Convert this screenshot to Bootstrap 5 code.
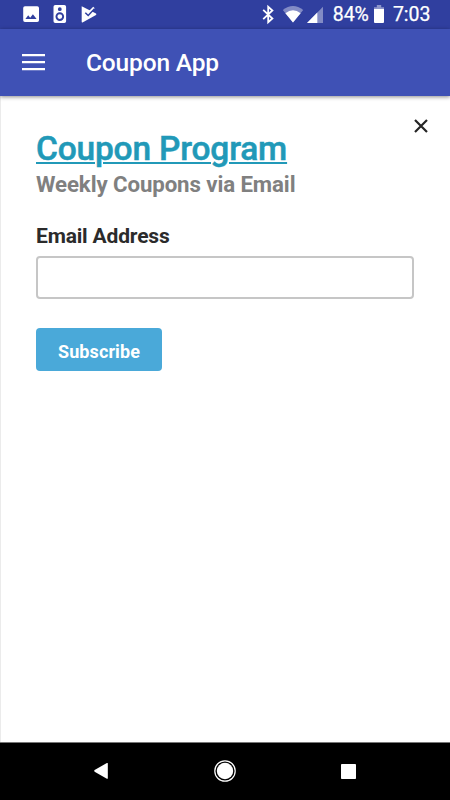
<!DOCTYPE html>
<html lang="en">
<head>
<meta charset="utf-8">
<meta name="viewport" content="width=device-width, initial-scale=1">
<title>Coupon App</title>
<link href="https://cdn.jsdelivr.net/npm/bootstrap@5.3.0/dist/css/bootstrap.min.css" rel="stylesheet">
<style>
  body { font-family: Roboto, "Noto Sans", sans-serif; height: 100vh; overflow: hidden; }
  svg { display: block; flex: none; }
  .status-bar { height: 29px; background: #303f9f; padding: 1px 19.5px 0 22px; font-size: 19.5px; line-height: 28px; -webkit-text-stroke: .25px #fff; }
  .app-bar { height: 67px; background: #3f51b5; padding: 0 22px; box-shadow: 0 1px 4px rgba(0,0,0,.45); z-index: 1; }
  .app-title { font-size: 24.5px; line-height: 30px; font-weight: 500; margin: 1px 0 0 41px; letter-spacing: -.15px; }
  .menu-btn, .close-btn { line-height: 0; }
  .page { border-left: 1px solid #ebebeb; padding: 23px 22px 0 35px; }
  .form-area { width: 378px; }
  .program-title { font-size: 33.5px; line-height: 40px; padding-top: 2px; font-weight: 500; -webkit-text-stroke: .5px #2199b8; letter-spacing: -.18px; color: #2199b8; text-decoration-thickness: 2px; text-underline-offset: 2px; }
  .program-title:hover { color: #2199b8; }
  .subtitle { font-size: 22.25px; line-height: 26px; letter-spacing: -.1px; color: #808080; padding-top: 2px; }
  .field-label { font-size: 21px; line-height: 26px; letter-spacing: -.17px; color: #2b2b2b; margin: 26px 0 7px; }
  .email-input { height: 43px; border: 2px solid #c6c6c6; border-radius: 4px; }
  .subscribe-btn { width: 126px; height: 43px; margin-top: 29px; background: #4aa9d9; border-radius: 4px; font-size: 18px; line-height: 24px; letter-spacing: .1px; padding: 5px 0 0; }
  .nav-keys { height: 58px; background: #000; border-top: 1px solid #777; }
</style>
</head>
<body class="d-flex flex-column bg-white">
<div class="status-bar d-flex align-items-center text-white">
  <svg width="76" height="28" viewBox="22 1 76 28" fill="#fff">
    <path fill-rule="evenodd" d="M25 6.200h12.200q1.800 0 1.800 1.800v12.200q0 1.800-1.800 1.800H25q-1.800 0-1.800-1.800V8q0-1.800 1.800-1.800zM25.400 19h11.200l-3.700-4.700-2.700 3.400-2-2.400z"/>
    <path fill-rule="evenodd" d="M55.300 5h9q1.800 0 1.800 1.800v14.400q0 1.800-1.800 1.800h-9q-1.800 0-1.800-1.800V6.800q0-1.800 1.800-1.800zM59.800 7.300a1.900 1.900 0 1 0 0 3.800 1.900 1.900 0 0 0 0-3.800zm0 5a4.300 4.300 0 1 0 0 8.600 4.300 4.300 0 0 0 0-8.600zm0 1.900a2.400 2.400 0 1 1 0 4.800 2.400 2.400 0 0 1 0-4.800z"/>
    <path d="M81.700 6.200 96 13.600q.8.700 0 1.400L82.500 22.400q-.8.300-.8-.6z"/>
    <path d="m87.500 11.500 2 .5 4.500-4.500" fill="none" stroke="#fff" stroke-width="2.200"/>
    <path d="m85.300 12.700 2.900 2.800 6.300-6.700" fill="none" stroke="#303f9f" stroke-width="1.500"/>
  </svg>
  <svg class="ms-auto" width="65" height="28" viewBox="260 1 65 28" fill="#fff">
    <path d="m263.200 9.800 9.200 8.700-4.200 3.700V6.800l4.200 3.700-9.200 8.700" fill="none" stroke="#fff" stroke-width="1.800"/>
    <path d="M293 22.500 282.800 10q10.200-8 20.400 0z" opacity=".4"/>
    <path d="M293 22.500 285.400 13.300q7.600-6 15.200 0z"/>
    <path d="M323 6.800V23h-16z" opacity=".4"/>
    <path d="M317.300 12.500V23H307z"/>
  </svg>
  <span id="battery-level" class="ms-2">84%</span>
  <svg class="ms-1" width="12" height="28" viewBox="373 1 12 28" fill="#fff">
    <path d="M376.800 5h4.400v2.200h2.800V10h-10V7.200h2.800z" opacity=".45"/>
    <path d="M374 9h10v13q0 1-1 1h-8q-1 0-1-1z"/>
  </svg>
  <span class="ms-2">7:03</span>
</div>
<header class="app-bar d-flex align-items-center text-white position-relative">
  <button class="menu-btn btn p-0 border-0" aria-label="Menu">
    <svg width="23" height="17" viewBox="0 0 23 17" fill="#fff"><path d="M0 0h23v2.200H0zM0 7h23v2.200H0zM0 14h23v2.200H0z"/></svg>
  </button>
  <h1 class="app-title">Coupon App</h1>
</header>
<main class="page flex-grow-1 d-flex justify-content-between align-items-start">
  <form class="form-area flex-shrink-0">
    <div><a href="#" class="program-title d-block mt-2">Coupon Program</a></div>
    <p class="subtitle fw-bold mb-0">Weekly Coupons via Email</p>
    <label for="email" class="field-label fw-bold d-block">Email Address</label>
    <input id="email" type="email" class="email-input form-control">
    <button type="button" class="subscribe-btn btn border-0 text-white fw-bold">Subscribe</button>
  </form>
  <button class="close-btn btn p-0 border-0" aria-label="Close">
    <svg width="14" height="14" viewBox="0 0 14 14" stroke="#252525" stroke-width="2.200"><path d="m1 1 12 12M13 1 1 13"/></svg>
  </button>
</main>
<nav class="nav-keys d-flex justify-content-center">
  <svg width="450" height="57" viewBox="0 743 450 57" fill="#fff">
    <path d="M107.800 763.600v14.600q0 1-.9.500l-12.300-7q-1-.8 0-1.600l12.300-7q.9-.5.900.5z"/>
    <circle cx="225" cy="771" r="10.200" fill="none" stroke="#fff" stroke-width="1.200"/>
    <circle cx="225" cy="771" r="8.200"/>
    <rect x="341" y="764" width="15" height="15" rx=".8"/>
  </svg>
</nav>
<script src="https://cdn.jsdelivr.net/npm/bootstrap@5.3.0/dist/js/bootstrap.bundle.min.js"></script>
</body>
</html>
